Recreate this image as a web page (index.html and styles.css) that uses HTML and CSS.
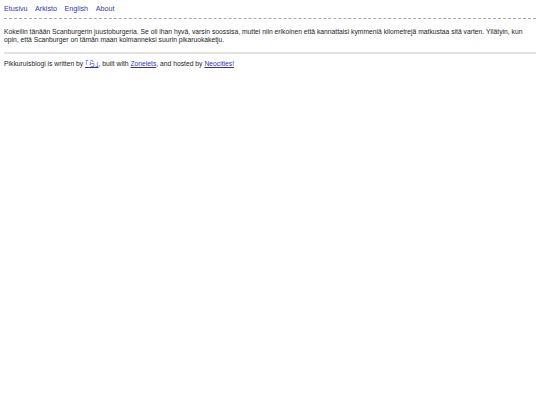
FILE: index.html
```html
<!DOCTYPE html>
<html lang="fi">
<head>
<meta charset="utf-8">
<title>Pikkuruisblogi</title>
<link rel="stylesheet" href="styles.css">
</head>
<body>
<nav class="nav">
  <a href="#">Etusivu</a>
  <a href="#">Arkisto</a>
  <a href="#">English</a>
  <a href="#">About</a>
</nav>
<hr class="rule-top">
<main class="post">
  <p>Kokeilin tänään Scanburgerin juustoburgeria. Se oli ihan hyvä, varsin soossisa, muttei niin erikoinen että kannattaisi kymmeniä kilometrejä matkustaa sitä varten. Yllätyin, kun opin, että Scanburger on tämän maan kolmanneksi suurin pikaruokaketju.</p>
</main>
<hr class="rule-bottom">
<footer class="footer">
  Pikkuruisblogi is written by <a href="#">｢ら｣</a>, built with <a href="#">Zonelets</a>, and hosted by <a href="#">Neocities!</a>
</footer>
</body>
</html>
```
FILE: styles.css
```css
html, body {
  background: #fff;
}
body {
  margin: 4px;
  font-family: "Liberation Sans", Arial, "Noto Sans CJK JP", sans-serif;
  font-size: 6.75px;
  line-height: 8px;
  color: #1e1e1e;
}
.nav {
  display: flex;
  gap: 7.5px;
  height: 9px;
  padding-top: 1px;
  font-size: 7.2px;
}
.nav a {
  color: #3535b8;
  text-decoration: none;
}
.rule-top {
  border: none;
  border-top: 1px dashed #aaa;
  margin: 4px 0 0 0;
  height: 0;
}
.post p {
  margin: 9px 0 0 0;
}
.rule-bottom {
  border: none;
  background: #e2e2e2;
  height: 2px;
  margin: 8px 0 0 0;
}
.footer {
  margin-top: 6px;
}
.footer a {
  color: #2f2fd0;
  text-decoration: underline;
}
```
